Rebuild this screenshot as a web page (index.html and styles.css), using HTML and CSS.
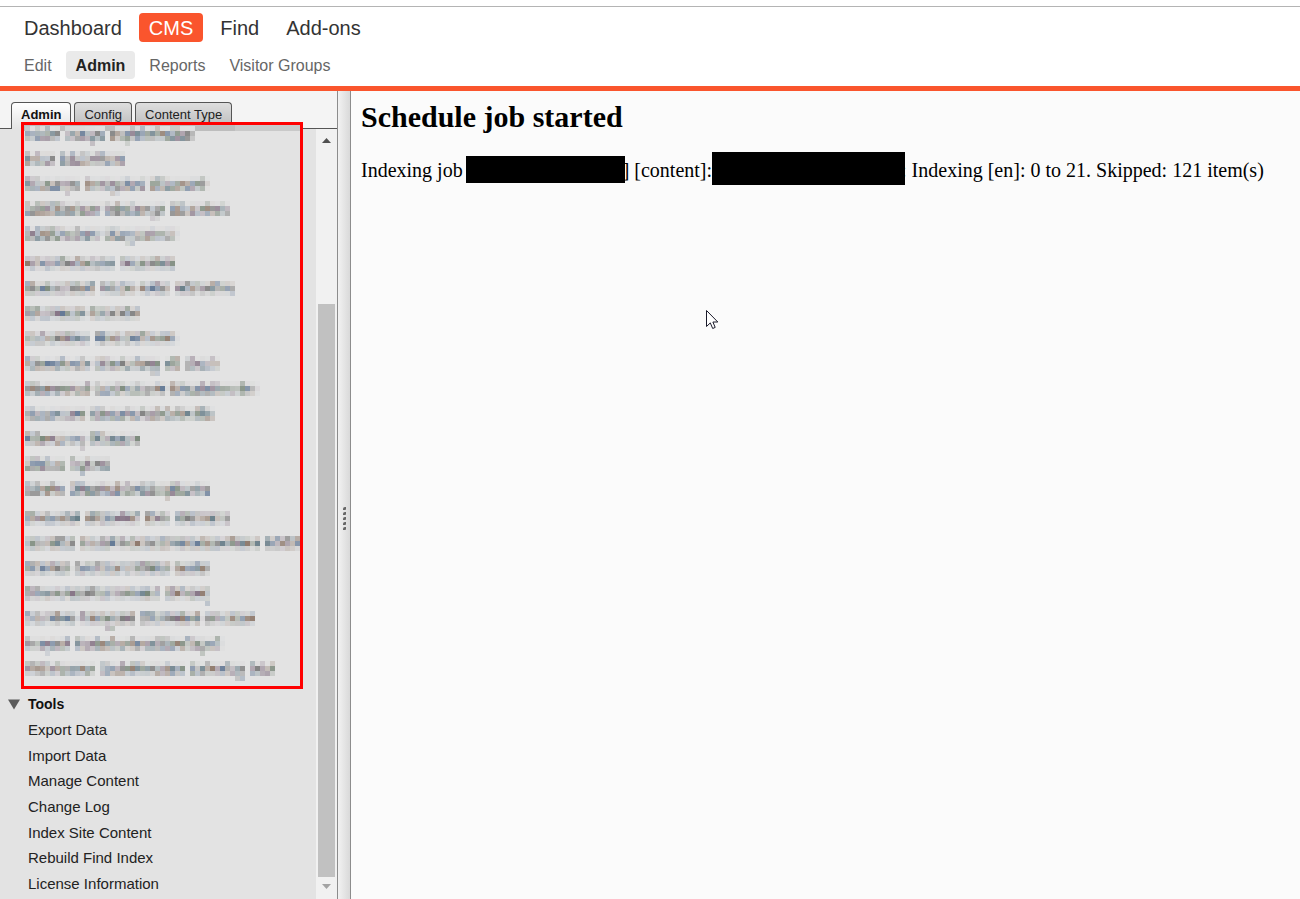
FILE: index.html
```html
<!DOCTYPE html>
<html lang="en">
  <head>
    <meta charset="utf-8">
    <title>Schedule job started</title>
    <link rel="stylesheet" href="styles.css">
  </head>
  <body>
    <!-- Global navigation -->
    <header class="top">
      <nav class="main-nav">
        <a href="#">Dashboard</a>
        <a href="#" class="active">CMS</a>
        <a href="#">Find</a>
        <a href="#">Add-ons</a>
      </nav>
      <nav class="sub-nav">
        <a href="#">Edit</a>
        <a href="#" class="active">Admin</a>
        <a href="#">Reports</a>
        <a href="#">Visitor Groups</a>
      </nav>
    </header>

    <div class="workspace">
      <aside class="sidebar">
        <div class="tabs">
          <button type="button" class="tab selected">Admin</button>
          <button type="button" class="tab">Config</button>
          <button type="button" class="tab">Content Type</button>
        </div>

        <div class="panel">
          <div class="menu">
            <!-- Job list, names hidden -->
            <div class="jobs">
              <svg id="mosaic" width="276" height="561" shape-rendering="crispEdges"></svg>
            </div>

            <h2 class="group">
              <svg width="12" height="11" viewBox="0 0 12 11"><path d="M0 0.500H12L6 10.500Z" fill="#5a5a5a"/></svg>
              Tools
            </h2>
            <ul class="links">
              <li><a href="#">Export Data</a></li>
              <li><a href="#">Import Data</a></li>
              <li><a href="#">Manage Content</a></li>
              <li><a href="#">Change Log</a></li>
              <li><a href="#">Index Site Content</a></li>
              <li><a href="#">Rebuild Find Index</a></li>
              <li><a href="#">License Information</a></li>
            </ul>
          </div>

          <div class="scrollbar">
            <svg width="9" height="5" viewBox="0 0 9 5"><path d="M0 5L4.500 0L9 5Z" fill="#505050"/></svg>
            <div class="thumb"></div>
            <svg width="9" height="5" viewBox="0 0 9 5"><path d="M0 0L4.500 5L9 0Z" fill="#a3a3a3"/></svg>
          </div>
        </div>
      </aside>

      <div class="splitter">
        <i></i><i></i><i></i><i></i><i></i>
      </div>

      <main class="content">
        <h1>Schedule job started</h1>
        <p>Indexing job <span class="bar bar-name"></span>] [content]:<span class="bar bar-content"></span>: Indexing [en]: 0 to 21. Skipped: 121 item(s)</p>
        <svg class="cursor" width="13" height="20" viewBox="0 0 13 20"><path d="M0.500 0.500V16.500L4.300 12.900L6.700 18.500L9.200 17.400L6.900 12H11.800Z" fill="#fff" stroke="#1a1a2a"/></svg>
      </main>
    </div>

    <script src="mosaic.js"></script>
  </body>
</html>
```
FILE: styles.css
```css
* {
  box-sizing: border-box;
}

body {
  margin: 0;
  height: 100vh;
  display: flex;
  flex-direction: column;
  overflow: hidden;
  background: #fff;
  font-family: "Liberation Sans", Arial, sans-serif;
}

a {
  color: inherit;
  text-decoration: none;
}

/* Header */
.top {
  margin-top: 6px;
  padding: 6px 14px 7px;
  border-top: 1px solid #b4b4b4;
  border-bottom: 5px solid #fa552d;
}

.main-nav,
.sub-nav {
  display: flex;
}

.main-nav {
  gap: 7px;
  margin-bottom: 9px;
  font-size: 20px;
  line-height: 27px;
  color: #333;
}

.sub-nav {
  gap: 4px;
  font-size: 16px;
  line-height: 26px;
  color: #666;
}

.main-nav a,
.sub-nav a {
  padding: 2px 10px 0;
  border-radius: 4px;
}

.main-nav .active {
  background: #fa552d;
  color: #fff;
}

.sub-nav .active {
  background: #eaeaea;
  color: #222;
  font-weight: bold;
}

.workspace {
  flex: 1;
  min-height: 0;
  display: flex;
}

/* Left pane */
.sidebar {
  flex: none;
  width: 338px;
  display: flex;
  flex-direction: column;
  background: #f4f4f4;
  border-right: 1px solid #8c8c8c;
}

.tabs {
  display: flex;
  gap: 3px;
  height: 38px;
  padding: 11px 11px 0;
  border-bottom: 1px solid #555;
}

.tab {
  padding: 0 9px 2px;
  border: 1px solid #555;
  border-bottom: none;
  border-radius: 4px 4px 0 0;
  background: linear-gradient(#dedede, #bcbcbc);
  font-family: inherit;
  font-size: 13px;
  line-height: 22px;
  color: #222;
}

.tab.selected {
  margin-bottom: -1px;
  background: linear-gradient(#fff, #e3e3e3);
  font-weight: bold;
  color: #111;
}

.panel {
  flex: 1;
  min-height: 0;
  display: flex;
  background: #e3e3e3;
}

.menu {
  flex: 1;
  display: flex;
  flex-direction: column;
}

/* The frame reaches up over the tabs */
.jobs {
  position: relative;
  margin: -7px 13px 0 21px;
  border: 3px solid #f00;
}

.jobs svg {
  display: block;
}

.group {
  display: flex;
  align-items: center;
  gap: 8px;
  margin: 0;
  padding: 3px 8px 0;
  font-size: 14px;
  line-height: 24px;
  color: #111;
}

.links {
  flex: 1;
  display: flex;
  flex-direction: column;
  justify-content: space-between;
  margin: 0;
  padding: 2px 0 3px 28px;
  list-style: none;
  font-size: 15px;
  line-height: 24px;
  color: #222;
}

.scrollbar {
  width: 21px;
  display: flex;
  flex-direction: column;
  align-items: center;
  padding: 9px 0 10px;
  background: #f1f1f1;
}

.thumb {
  flex: 1;
  width: 17px;
  margin: 161px 0 7px;
  background: #c1c1c1;
}

.splitter {
  flex: none;
  width: 13px;
  display: flex;
  flex-direction: column;
  align-items: center;
  justify-content: center;
  gap: 2px;
  padding-top: 46px;
  background: linear-gradient(to right, #f2f2f2, #d9d9d9);
  border-right: 1px solid #8c8c8c;
}

.splitter i {
  width: 3px;
  height: 3px;
  border-radius: 2px 0 1px 0;
  background: #666;
}

/* Job output */
.content {
  position: relative;
  flex: 1;
  padding: 9px 10px;
  background: #fbfbfb;
  font-family: "Liberation Serif", "Times New Roman", serif;
  font-size: 20px;
  color: #000;
}

.content h1 {
  margin: 0 0 18px;
  font-size: 30px;
  line-height: 34px;
}

.content p {
  margin: 0;
  line-height: 33px;
}

/* Blacked-out values, slightly over the text next to them */
.bar {
  position: relative;
  display: inline-block;
  background: #000;
}

.bar-name {
  width: 159px;
  height: 27px;
  margin: 0 -2px;
  vertical-align: -6px;
}

.bar-content {
  width: 193px;
  height: 33px;
  margin-right: -4px;
  vertical-align: -8px;
}

.cursor {
  position: absolute;
  left: 355px;
  top: 219px;
}
```
FILE: mosaic.js
```js
// One string per job: l = tall, x = low, p = with a tail, . = faint, space = gap
const rows = [
  "lxlxlxx lxxxxpxx lxxplxlxxlxxllxxx",
  "lxlxxx lxlxllxllxxxx",
  "lllxxxxxpxx lxxxxppxlxxl.lllxxxxxxxl.",
  "lxllllllxxlxxxx.lxlxxlxxxppx lllxxxxlxxlx",
  "lxllllllxxlxxxx.lllxppxxxlxxxx.",
  "lllxxxllxxlxxxxxxx llxxxxxlxxx",
  "llxxlxxxxxlxxl lllxlxx.lxxlxx lllxxxxllxxx",
  "lllxxllxxxxx.lxxxxlxlxx",
  "llxlxxxxllxxx llxxlxlxxlxxxxxx.",
  "lllxxxxlxxxlx.lllxxlxxlxxpp xll llxxxlx",
  "lllxxxxxxxxxl.lxxxllxxlxxxlx.lllxxxlxllxxxxlxx.",
  "llxxxxxxxxxx.lllxxxxlxxlxxlxlxllxxlllx",
  "lllxxxxxxxxp.lllxxxxxxx",
  "lllxlxxx lxplxxxx",
  "lllxxlxx lllxxxlxxlxlxxlllxxpllxxxlxx",
  "llxxlxxllxl lllxxxxlxxl llxlx llllxxxxxxx",
  "lxlxxxllxl llxxlxlllxlxxxxxllxxxlxxlxlxxlllxxxx lllllll",
  "llllxlxxl.lxxxlxxlxxxllllllxx.lxxxlxx",
  "lllxxxxxxxxxxllxxxxxxxxxxxl llxlxlxxp",
  "lllxlxlxxl.lllxxppxxxl lllxxlxxlxxl.lxxxxlxxxx",
  "lxxxpxxxl llxxlxxlxxxlxxxxlllxxxllxpxxl.",
  "lllllxlxxxxxxx llxxlxlllxxxxlxxx lxxlxxxlxpp lxlxl",
];

const cell = 5;
const tints = [[0, 0, 0], [6, 0, -4], [-6, 0, 8], [0, 4, 0], [3, -2, 3], [-4, 2, 5]];
const svg = document.getElementById("mosaic");

function noise(a, b, c) {
  const n = Math.sin(a * 12.9898 + b * 78.233 + c * 37.719) * 43758.5453;
  return n - Math.floor(n);
}

function block(x, y, w, h, fill) {
  const r = document.createElementNS("http://www.w3.org/2000/svg", "rect");
  r.setAttribute("x", x);
  r.setAttribute("y", y);
  r.setAttribute("width", w);
  r.setAttribute("height", h);
  r.setAttribute("fill", fill);
  svg.appendChild(r);
}

// smeared edge of the tab strip
block(0, 0, 276, 6, "#c9c9c9");
block(0, 0, 211, 6, "#bdbdbd");

rows.forEach((row, i) => {
  const top = 1 + i * 25 + (i > 4 ? 5 : 0) + (i > 14 ? 5 : 0);
  // how dark the three lines of cells are
  let dark = [32, 66, 60];
  if ((i > 4 && i < 9) || (i > 14 && i < 20)) dark = [50, 76, 22];
  else if ((i > 8 && i < 13) || i > 19) dark = [38, 72, 42];

  [...row].forEach((ch, j) => {
    if (ch === " ") return;
    for (let k = 0; k < 4; k++) {
      let d = k < 3 ? dark[k] : 28;
      if (k === 0 && ch !== "l") d = dark[0] > 40 ? 24 : 6;
      if (k === 3 && ch !== "p") continue;
      if (ch === ".") d = k === 1 ? 14 : 4;
      d = d * (0.4 + noise(i + 1, j + 1, k + 1));
      const t = tints[Math.floor(noise(j + 3, i + 5, k + 2) * tints.length)];
      const rgb = t.map((v) => Math.round(227 - d + v * d / 30));
      block(1 + j * cell, top + k * cell, cell, cell, "rgb(" + rgb.join(",") + ")");
    }
  });
});
```
